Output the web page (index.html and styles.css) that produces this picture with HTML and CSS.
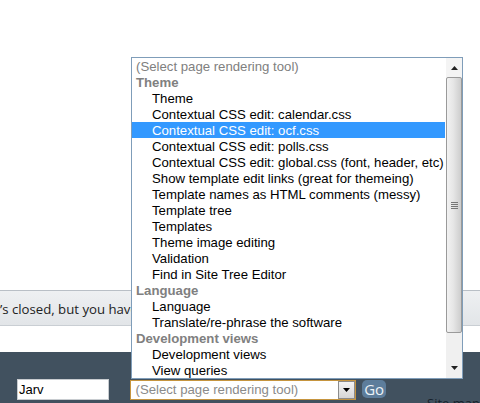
FILE: index.html
```html
<!DOCTYPE html>
<html>
<head>
<meta charset="utf-8">
<link rel="stylesheet" href="styles.css">
</head>
<body>
<div class="page">
  <div class="top"></div>
  <div class="notice"><span class="notice-text">’s closed, but you have</span></div>
  <div class="gap"></div>
  <div class="footer">
    <div class="controls">
      <div class="search">Jarv</div>
      <div class="select">
        <span class="select-text">(Select page rendering tool)</span>
        <span class="select-btn"><svg width="9" height="5" viewBox="0 0 9 5"><path d="M1 0h7L4.5 4z" fill="#000"/></svg></span>
      </div>
      <div class="go">Go</div>
      <div class="sitemap">Site map</div>
    </div>
  </div>

  <div class="listbox">
    <div class="options">
      <div class="opt placeholder">(Select page rendering tool)</div>
      <div class="group">Theme</div>
      <div class="opt item">Theme</div>
      <div class="opt item">Contextual CSS edit: calendar.css</div>
      <div class="opt item selected">Contextual CSS edit: ocf.css</div>
      <div class="opt item">Contextual CSS edit: polls.css</div>
      <div class="opt item">Contextual CSS edit: global.css (font, header, etc)</div>
      <div class="opt item">Show template edit links (great for themeing)</div>
      <div class="opt item">Template names as HTML comments (messy)</div>
      <div class="opt item">Template tree</div>
      <div class="opt item">Templates</div>
      <div class="opt item">Theme image editing</div>
      <div class="opt item">Validation</div>
      <div class="opt item">Find in Site Tree Editor</div>
      <div class="group">Language</div>
      <div class="opt item">Language</div>
      <div class="opt item">Translate/re-phrase the software</div>
      <div class="group">Development views</div>
      <div class="opt item">Development views</div>
      <div class="opt item">View queries</div>
    </div>
    <div class="scrollbar">
      <div class="sb-up"><svg width="7" height="4" viewBox="0 0 7 4"><path d="M3.5 0L7 4H0z" fill="#222"/></svg></div>
      <div class="sb-thumb"><span class="grip"></span><span class="grip"></span><span class="grip"></span><span class="grip"></span></div>
      <div class="sb-track"></div>
      <div class="sb-down"><svg width="7" height="4" viewBox="0 0 7 4"><path d="M0 0h7L3.5 4z" fill="#222"/></svg></div>
    </div>
  </div>
</div>
</body>
</html>
```
FILE: styles.css
```css
html, body {
  margin: 0;
  padding: 0;
  background: #fff;
}
.page {
  position: relative;
  width: 480px;
  height: 403px;
  overflow: hidden;
  font-family: "Liberation Sans", Arial, sans-serif;
}
.top {
  height: 290px;
  background: #fff;
}
.notice {
  height: 34px;
  border-top: 1px solid #b9bfc6;
  background: linear-gradient(#eef0f2, #e2e5e8);
  border-bottom: 1px solid #c9ced3;
  display: flex;
  align-items: center;
  white-space: nowrap;
  overflow: hidden;
}
.notice-text {
  font-family: "Open Sans", "Noto Sans", sans-serif;
  font-size: 13.2px;
  color: #222;
  padding-top: 1px;
}
.gap {
  height: 26px;
  background: #fff;
}
.footer {
  height: 51px;
  background: #41515f;
}
.controls {
  display: flex;
  align-items: flex-start;
  padding-top: 27px;
  padding-left: 17px;
}
.search {
  box-sizing: border-box;
  width: 93px;
  height: 21px;
  background: #fff;
  border: 1px solid #c8ccd0;
  font-size: 13px;
  line-height: 20px;
  padding-left: 1px;
  color: #000;
}
.select {
  box-sizing: border-box;
  margin-left: 21px;
  width: 227px;
  height: 20px;
  margin-top: 1px;
  background: #fff;
  border: 1px solid #c6953f;
  display: flex;
  align-items: center;
  justify-content: space-between;
}
.select-text {
  font-size: 13.2px;
  color: #8a8a8a;
  padding-left: 4px;
  line-height: 18px;
}
.select-btn {
  box-sizing: border-box;
  width: 17px;
  height: 18px;
  border: 1px solid #8c8c8c;
  background: linear-gradient(#f4f4f4, #d6d6d6);
  display: flex;
  align-items: center;
  justify-content: center;
}
.go {
  margin-left: 6px;
  margin-top: 1px;
  width: 24px;
  height: 18px;
  border-radius: 5px;
  background: #5d7d9b;
  color: #eef3f7;
  font-family: "Open Sans", "Noto Sans", sans-serif;
  font-size: 15px;
  line-height: 18px;
  text-align: center;
}
.sitemap {
  margin-left: 41px;
  margin-top: 15px;
  font-family: "Open Sans", "Noto Sans", sans-serif;
  font-size: 13px;
  color: #17212b;
  white-space: nowrap;
}

.listbox {
  position: absolute;
  left: 131px;
  top: 57px;
  width: 330px;
  height: 320px;
  border: 1px solid #7f9db9;
  background: #fff;
  display: flex;
}
.options {
  width: 314px;
  overflow: hidden;
}
.opt, .group {
  box-sizing: border-box;
  height: 16px;
  line-height: 16px;
  padding-top: 1px;
  font-size: 13.2px;
  white-space: nowrap;
}
.placeholder {
  color: #808080;
  padding-left: 4px;
}
.group {
  color: #808080;
  font-weight: bold;
  padding-left: 4px;
}
.item {
  color: #000;
  padding-left: 20px;
}
.selected {
  background: #3399ff;
  color: #fff;
  margin-right: 1px;
}
.scrollbar {
  width: 16px;
  display: flex;
  flex-direction: column;
  background: #f1f1f1;
}
.sb-up {
  height: 19px;
  display: flex;
  align-items: center;
  justify-content: center;
  background: #f4f4f4;
}
.sb-thumb {
  box-sizing: border-box;
  height: 256px;
  border: 1px solid #9a9a9a;
  border-radius: 2px;
  background: linear-gradient(to right, #f2f2f2, #e6e6e6 45%, #cdcdcd);
  display: flex;
  flex-direction: column;
  align-items: center;
  justify-content: center;
  gap: 1px;
}
.grip {
  display: block;
  width: 7px;
  height: 1px;
  background: #777;
}
.sb-track {
  flex: 1;
  background: #f0f0f0;
}
.sb-down {
  height: 12px;
  display: flex;
  align-items: flex-start;
  justify-content: center;
  padding-top: 1px;
  background: #f0f0f0;
}
```
